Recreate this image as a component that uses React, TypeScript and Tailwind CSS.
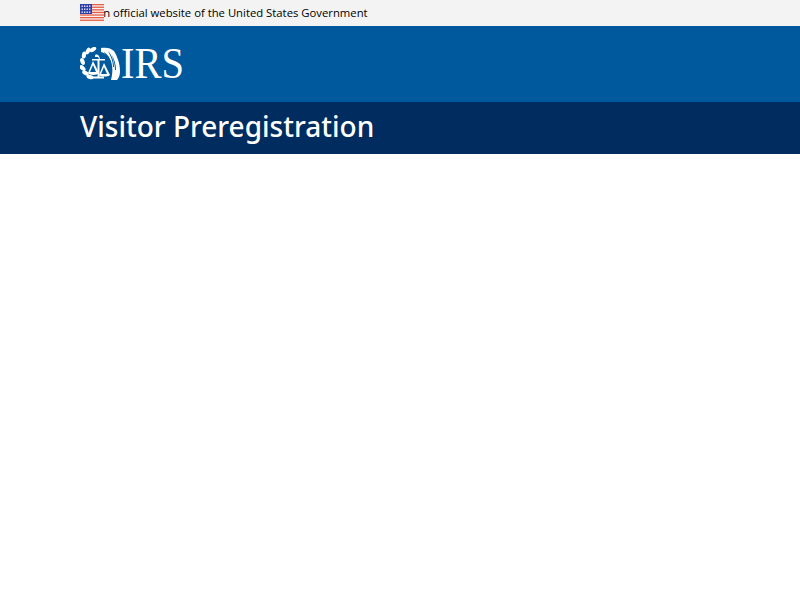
function Flag() {
  const stripes = [0, 2.6, 5.2, 7.8, 10.4, 13, 15.6];
  return (
    <svg width="24" height="18" viewBox="0 0 24 18" className="absolute left-0 top-[4px]">
      <rect width="24" height="18" fill="#f8eeec" />
      {stripes.map((y) => (
        <rect key={y} y={y} width="24" height="1.3" fill="#e4604a" />
      ))}
      <rect width="12" height="10" fill="#2b3fa6" />
      {[1.5, 4.5, 7.5].map((y) =>
        [1.5, 4, 6.5, 9].map((x) => (
          <rect key={`${x}-${y}`} x={x} y={y} width="1.4" height="1.4" fill="#e8ecfa" />
        )),
      )}
    </svg>
  );
}

const leaves = [
  { x: 13, y: 2.500, r: 60 },
  { x: 8, y: 4, r: 30 },
  { x: 4, y: 8, r: 10 },
  { x: 2.500, y: 14.500, r: -20 },
  { x: 2.500, y: 21, r: -50 },
  { x: 5.500, y: 26, r: -60 },
  { x: 10, y: 30, r: -75 },
];

function Seal() {
  return (
    <svg width="41" height="33" viewBox="0 0 41 33">
      <g fill="#fff">
        {leaves.map((l) => (
          <ellipse key={l.y} cx={l.x} cy={l.y} rx="2.100" ry="3.600" transform={`rotate(${l.r} ${l.x} ${l.y})`} />
        ))}
        <path d="M21 1c5-1 10 0 13 3 3 5 6 12 6 20 0 4-1 7-3 9h-6c2-7 2-15-1-21-2-4-5-6-9-7z" />
        <path d="M15 8c2-1 3 0 4 1l1 3h-1l-1-2h-3z" />
        <path d="M12 12h13v1.400h-5.500v16H24v2H13v-2h4.500v-16H12z" />
        <path d="M13 14 8 26c1 2.500 9 2.500 11 0z" />
        <path d="M24 16 19 28c1 2 9 2 11 0z" />
      </g>
      <g fill="#00599c">
        <path d="M13 18l-3 7h6zM24 20l-3 7h6z" />
        <path d="M24 5c3 2 6 6 7 11l-1 .500c-1-5-3-8-6-11zM28 4c3 3 6 9 6 16h-1c0-7-3-12-5-16zM32 8c2 4 4 9 4 15h-1c0-6-2-11-3-15z" />
      </g>
    </svg>
  );
}

export default function App() {
  return (
    <div className="min-h-[600px] bg-white">
      <div className="h-[26px] bg-[#f3f3f3]">
        <div className="relative ml-[80px] pl-[16px] font-['Open_Sans',sans-serif] text-[11.3px] leading-[26px] text-black">
          An official website of the United States Government
          <Flag />
        </div>
      </div>
      <div className="h-[76px] bg-[#00599c] pl-[80px] pt-[21px]">
        <div className="flex items-center">
          <Seal />
          <span className="origin-left scale-x-[0.9] font-['Liberation_Serif',serif] text-[45px] leading-[33px] text-white">
            IRS
          </span>
        </div>
      </div>
      <div className="h-[52px] bg-[#002c5f] pl-[80px]">
        <h1 className="font-['Noto_Sans',sans-serif] text-[28px] font-medium leading-[48px] text-white">
          Visitor Preregistration
        </h1>
      </div>
    </div>
  );
}
